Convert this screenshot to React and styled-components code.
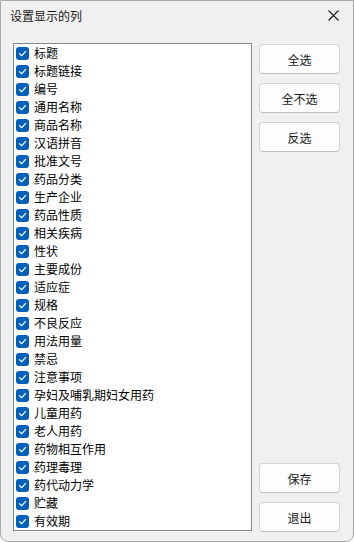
import React from 'react';
import styled, { createGlobalStyle } from 'styled-components';

const GlobalStyle = createGlobalStyle`
  html, body {
    margin: 0;
    padding: 0;
    background: #ffffff;
  }
  * {
    box-sizing: border-box;
  }
`;

const columns = [
  '标题', '标题链接', '编号', '通用名称', '商品名称', '汉语拼音', '批准文号',
  '药品分类', '生产企业', '药品性质', '相关疾病', '性状', '主要成份', '适应症',
  '规格', '不良反应', '用法用量', '禁忌', '注意事项', '孕妇及哺乳期妇女用药',
  '儿童用药', '老人用药', '药物相互作用', '药理毒理', '药代动力学', '贮藏', '有效期',
];

const Check = () => (
  <Box>
    <svg width="9" height="9" viewBox="0 0 10 10">
      <path d="M1.6 5.2 L4 7.5 L8.5 2.6" fill="none" stroke="#fff" strokeWidth="1.3" strokeLinecap="round" strokeLinejoin="round" />
    </svg>
  </Box>
);

const App = () => {
  return (
    <>
      <GlobalStyle />
      <Window>
        <TitleBar>
          <Title>设置显示的列</Title>
          <Close>
            <svg width="11" height="11" viewBox="0 0 11 11">
              <path d="M0.5 0.5 L10.5 10.5 M10.5 0.5 L0.5 10.5" stroke="#1a1a1a" strokeWidth="1.1" />
            </svg>
          </Close>
        </TitleBar>
        <Body>
          <List>
            {columns.map((c) => (
              <Row key={c}>
                <Check />
                <Label>{c}</Label>
              </Row>
            ))}
          </List>
          <Side>
            <Button>全选</Button>
            <Button>全不选</Button>
            <Button>反选</Button>
            <Spacer />
            <Button>保存</Button>
            <Button>退出</Button>
          </Side>
        </Body>
      </Window>
    </>
  );
};

export default App;

const Window = styled.div`
  width: 354px;
  height: 542px;
  background: #f0f0f0;
  border: 1px solid #a9a9a9;
  border-radius: 0 0 8px 8px;
  display: flex;
  flex-direction: column;
  font-family: "Noto Sans CJK SC", "Noto Sans", sans-serif;
  font-size: 12px;
  color: #000;
  overflow: hidden;
`;

const TitleBar = styled.div`
  height: 29px;
  display: flex;
  align-items: center;
  justify-content: space-between;
  padding: 0 10px 0 9px;
  flex-shrink: 0;
`;

const Title = styled.div`
  font-size: 12px;
  color: #1a1a1a;
`;

const Close = styled.div`
  width: 18px;
  display: flex;
  justify-content: center;
  align-items: center;
  margin-right: 1px;
`;

const Body = styled.div`
  flex: 1;
  display: flex;
  gap: 7px;
  padding: 13px 13px 9px 12px;
`;

const List = styled.div`
  width: 239px;
  height: 488px;
  background: #fff;
  border: 1px solid #828790;
  padding-left: 2px;
  overflow: hidden;
`;

const Row = styled.div`
  height: 18px;
  display: flex;
  align-items: center;
  gap: 5px;
`;

const Box = styled.div`
  width: 13px;
  height: 13px;
  border-radius: 3px;
  background: #005fb8;
  display: flex;
  align-items: center;
  justify-content: center;
  flex-shrink: 0;
`;

const Label = styled.span`
  line-height: 18px;
  white-space: nowrap;
`;

const Side = styled.div`
  width: 81px;
  display: flex;
  flex-direction: column;
  gap: 9px;
  padding-top: 1px;
`;

const Spacer = styled.div`
  flex: 1;
`;

const Button = styled.button`
  height: 30px;
  width: 81px;
  background: #fdfdfd;
  border: 1px solid #d3d3d3;
  border-bottom-color: #c0c0c0;
  border-radius: 4px;
  font-family: inherit;
  font-size: 12px;
  color: #1a1a1a;
  padding: 0;
`;
